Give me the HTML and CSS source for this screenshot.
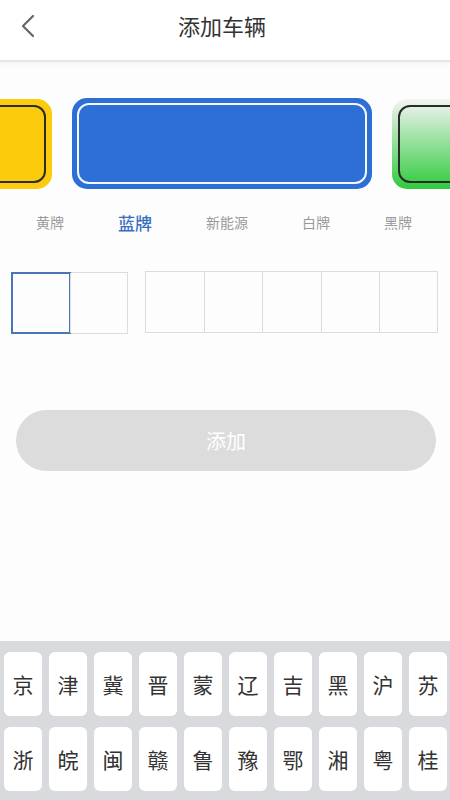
FILE: index.html
```html
<!DOCTYPE html>
<html lang="zh-CN">
<head>
    <meta charset="UTF-8">
    <meta name="viewport" content="width=device-width, initial-scale=1.0">
    <title>添加车辆</title>
    <link rel="stylesheet" href="styles.css">
</head>
<body>
    <div class="page">
        <div class="header">
            <a class="back" href="#">
                <svg width="14" height="24" viewBox="0 0 14 24"><path d="M12 2 L2 12 L12 22" fill="none" stroke="#666" stroke-width="2.2" stroke-linecap="round" stroke-linejoin="round"/></svg>
            </a>
            <div class="title">添加车辆</div>
        </div>

        <div class="plates">
            <div class="plate yellow"><div class="plate-inner"></div></div>
            <div class="plate blue"><div class="plate-inner"></div></div>
            <div class="plate green"><div class="plate-inner"></div></div>
        </div>

        <div class="tabs">
            <span class="tab">黄牌</span>
            <span class="tab active">蓝牌</span>
            <span class="tab">新能源</span>
            <span class="tab">白牌</span>
            <span class="tab">黑牌</span>
        </div>

        <div class="inputs">
            <div class="group">
                <div class="cell active"></div>
                <div class="cell"></div>
            </div>
            <div class="group wide">
                <div class="cell"></div>
                <div class="cell"></div>
                <div class="cell"></div>
                <div class="cell"></div>
                <div class="cell"></div>
            </div>
        </div>

        <button class="submit">添加</button>

        <div class="keyboard">
            <div class="row">
                <span class="key">京</span><span class="key">津</span><span class="key">冀</span><span class="key">晋</span><span class="key">蒙</span>
                <span class="key">辽</span><span class="key">吉</span><span class="key">黑</span><span class="key">沪</span><span class="key">苏</span>
            </div>
            <div class="row">
                <span class="key">浙</span><span class="key">皖</span><span class="key">闽</span><span class="key">赣</span><span class="key">鲁</span>
                <span class="key">豫</span><span class="key">鄂</span><span class="key">湘</span><span class="key">粤</span><span class="key">桂</span>
            </div>
            <div class="row">
                <span class="key"></span><span class="key"></span><span class="key"></span><span class="key"></span><span class="key"></span>
                <span class="key"></span><span class="key"></span><span class="key"></span><span class="key"></span><span class="key"></span>
            </div>
        </div>
    </div>
</body>
</html>
```

FILE: styles.css
```css
body {
    margin: 0;
    font-family: "Noto Sans CJK SC", "Noto Sans", sans-serif;
    background: #fdfdfd;
    overflow: hidden;
}
.page {
    height: 800px;
    display: flex;
    flex-direction: column;
    overflow: hidden;
}
.header {
    height: 60px;
    display: flex;
    align-items: center;
    justify-content: center;
    position: relative;
    border-bottom: 2px solid #e6e6e6;
    box-shadow: 0 3px 6px rgba(0, 0, 0, 0.04);
    background: #fff;
}
.back {
    position: absolute;
    left: 21px;
    top: 14px;
    display: flex;
}
.title {
    font-size: 22px;
    color: #333;
    margin-top: -10px;
    margin-left: -6px;
}
.plates {
    display: flex;
    align-items: center;
    gap: 20px;
    margin-top: 36px;
    margin-left: -248px;
}
.plate {
    flex: 0 0 300px;
    height: 91px;
    border-radius: 15px;
    padding: 5px;
    box-sizing: border-box;
}
.plate-inner {
    height: 100%;
    border-radius: 12px;
    box-sizing: border-box;
}
.yellow {
    height: 90px;
    background: #fccb0c;
    padding: 6px;
}
.yellow .plate-inner {
    border: 2px solid #2a2a2a;
}
.blue {
    background: #2e6fd5;
}
.blue .plate-inner {
    border: 2px solid #f4f8ff;
}
.green {
    height: 90px;
    background: linear-gradient(#f4f4f4, #2fcb3c);
    padding: 6px;
}
.green .plate-inner {
    border: 2px solid #2a2a2a;
}
.tabs {
    display: flex;
    align-items: center;
    gap: 54px;
    padding-left: 36px;
    margin-top: 19px;
    height: 28px;
}
.tab {
    font-size: 14px;
    color: #9a9a9a;
    white-space: nowrap;
}
.tab.active {
    font-size: 17px;
    color: #3a6fbf;
    font-weight: 500;
}
.inputs {
    display: flex;
    align-items: center;
    gap: 17px;
    padding-left: 11px;
    margin-top: 36px;
}
.group {
    display: grid;
    grid-template-columns: repeat(2, 1fr);
    width: 117px;
    height: 62px;
    border: 1px solid #dcdcdc;
    box-sizing: border-box;
}
.group.wide {
    grid-template-columns: repeat(5, 1fr);
    width: 293px;
    margin-top: -2px;
}
.cell {
    border-left: 1px solid #dcdcdc;
}
.cell:first-child {
    border-left: none;
}
.cell.active {
    margin: -1px;
    border: 2px solid #4a76b8;
}
.submit {
    margin: 76px 14px 0 16px;
    height: 61px;
    border: none;
    border-radius: 31px;
    background: #dcdcdc;
    color: #fff;
    font-family: inherit;
    font-size: 20px;
}
.keyboard {
    margin-top: auto;
    height: 159px;
    background: #d9dadd;
    padding: 11px 0 0 4px;
    box-sizing: border-box;
    display: flex;
    flex-direction: column;
    gap: 11px;
}
.row {
    display: flex;
    gap: 7px;
}
.key {
    flex: 0 0 38px;
    height: 64px;
    display: flex;
    align-items: center;
    justify-content: center;
    background: #fff;
    border-radius: 6px;
    font-size: 21px;
    color: #333;
}
```
